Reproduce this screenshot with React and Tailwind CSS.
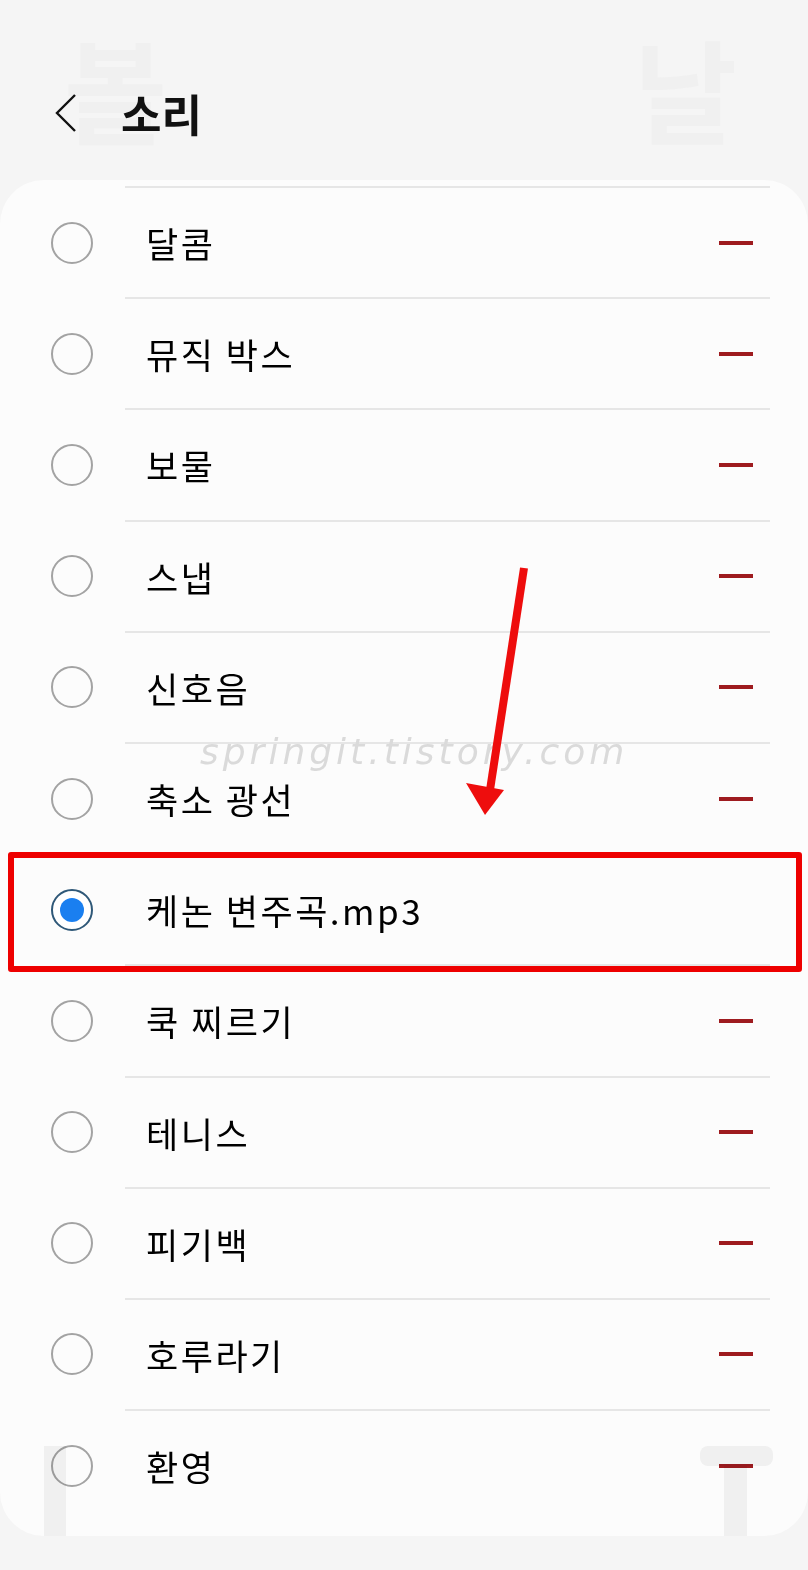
import React from "react";

const sounds = [
  "달콤",
  "뮤직 박스",
  "보물",
  "스냅",
  "신호음",
  "축소 광선",
  "케논 변주곡.mp3",
  "쿡 찌르기",
  "테니스",
  "피기백",
  "호루라기",
  "환영",
];

const SELECTED = "케논 변주곡.mp3";

const Radio = ({ checked }) =>
  checked ? (
    <span className="flex h-[42px] w-[42px] shrink-0 items-center justify-center rounded-full border-2 border-[#2f5878] bg-white">
      <span className="h-[24px] w-[24px] rounded-full bg-[#1a7ff0]" />
    </span>
  ) : (
    <span className="h-[42px] w-[42px] shrink-0 rounded-full border-2 border-[#a3a3a3]" />
  );

export default function App() {
  return (
    <div
      className="relative h-[1570px] w-[808px] overflow-hidden bg-[#f5f5f5]"
      style={{ fontFamily: '"Noto Sans CJK KR", "Noto Sans", sans-serif' }}
    >
      {/* faint ghost letters behind the header */}
      <span className="absolute left-[64px] top-[26px] text-[112px] font-bold leading-[1.1] text-[#f0f0f0]">볼</span>
      <span className="absolute left-[634px] top-[26px] text-[112px] font-bold leading-[1.1] text-[#f0f0f0]">날</span>

      <header className="relative flex h-[180px] items-center gap-[43px] pl-[54px] pt-[46px]">
        <svg width="24" height="40" viewBox="0 0 24 40" fill="none">
          <polyline points="21,2 3,20 21,38" stroke="#111" strokeWidth="2.4" />
        </svg>
        <h1 className="text-[44px] font-bold leading-none text-[#111]">소리</h1>
      </header>

      <main className="relative rounded-[44px] bg-[#fcfcfc] pb-[16px] pt-[6px]">
        {sounds.map((name) => {
          const checked = name === SELECTED;
          return (
            <div key={name}>
              <div className="ml-[125px] mr-[38px] h-[2px] bg-[#e6e6e6]" />
              <div className="flex h-[109.2px] items-center pl-[51px] pr-[55px]">
                <Radio checked={checked} />
                <span className="ml-[53px] flex-1 text-[35px] font-normal leading-none tracking-[2.5px] text-black">
                  {name}
                </span>
                {!checked ? <span className="h-[4px] w-[34px] bg-[#9e1b1f]" /> : null}
              </div>
            </div>
          );
        })}

        {/* bottom ghost marks */}
        <span className="absolute bottom-0 left-[44px] h-[90px] w-[22px] bg-[#f3f3f3] mix-blend-multiply" />
        <span className="absolute bottom-0 left-[724px] h-[70px] w-[23px] bg-[#f3f3f3] mix-blend-multiply" />
        <span className="absolute bottom-[70px] left-[700px] h-[20px] w-[73px] rounded-[8px] bg-[#f3f3f3] mix-blend-multiply" />
      </main>

      {/* watermark */}
      <span
        className="absolute left-[200px] top-[734px] text-[36px] italic leading-none tracking-[4px] text-[#dadada]"
        style={{ fontFamily: '"DejaVu Sans", sans-serif' }}
      >
        springit.tistory.com
      </span>

      {/* annotation arrow */}
      <svg className="absolute left-0 top-0" width="808" height="1570" viewBox="0 0 808 1570" fill="none">
        <line x1="524" y1="568" x2="490" y2="790" stroke="#ee0d0d" strokeWidth="8" />
        <polygon points="466,783 504,790 485,815" fill="#ee0d0d" />
      </svg>

      {/* highlight box */}
      <div className="absolute left-[8px] top-[852px] h-[120px] w-[794px] rounded-[3px] border-[6px] border-[#ee0000]" />
    </div>
  );
}
